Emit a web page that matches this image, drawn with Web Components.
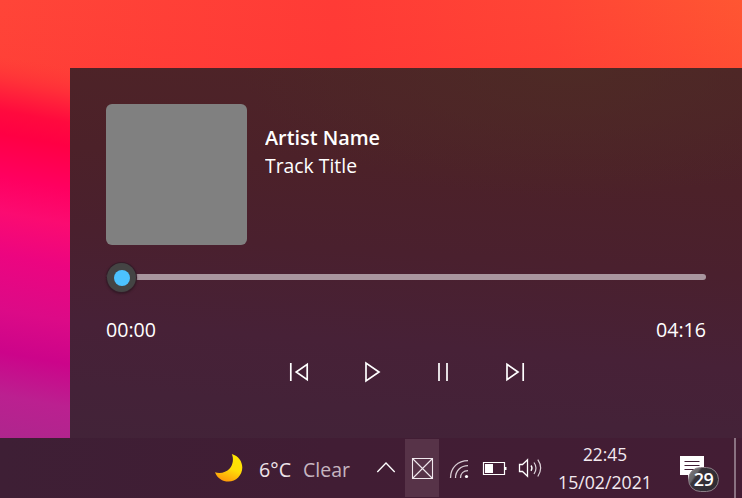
<!DOCTYPE html>
<html lang="en">
<head>
<meta charset="utf-8">
<title>Media flyout</title>
<style>
html,body{margin:0;width:742px;height:498px;overflow:hidden;font-family:"Open Sans","Noto Sans",sans-serif;color:#fff}
</style>
</head>
<body>
<desk-top>
  <media-flyout slot="flyout">
    <track-info slot="info">
      <fit-text slot="artist" fit="115" style="font-weight:600">Artist Name</fit-text>
      <fit-text slot="title" fit="92">Track Title</fit-text>
    </track-info>
    <seek-bar slot="seek">
      <fit-text slot="elapsed" fit="50">00:00</fit-text>
      <fit-text slot="total" fit="50">04:16</fit-text>
    </seek-bar>
    <transport-controls slot="controls"></transport-controls>
  </media-flyout>
  <task-bar slot="taskbar">
    <weather-item>
      <fit-text fit="32">6°C</fit-text>
      <fit-text slot="sky" fit="47">Clear</fit-text>
    </weather-item>
    <tray-icons></tray-icons>
    <clock-item>
      <fit-text slot="time" fit="44">22:45</fit-text>
      <fit-text slot="date" fit="94">15/02/2021</fit-text>
    </clock-item>
    <action-center>29</action-center>
  </task-bar>
</desk-top>
<script>
function define(name, html, setup) {
  const t = document.createElement('template');
  t.innerHTML = html;
  customElements.define(name, class extends HTMLElement {
    constructor() {
      super();
      this.attachShadow({ mode: 'open' }).appendChild(t.content.cloneNode(true));
    }
    connectedCallback() { if (setup) setup(this); }
  });
}

define('desk-top', `<style>
:host{display:grid;grid-template-columns:70px 672px;grid-template-rows:68px 370px 60px;width:742px;height:498px;position:relative;isolation:isolate}
svg{grid-area:1/1/4/3;z-index:-1}
.f{grid-area:2/2}.t{grid-area:3/1/4/3}
.f,.t{display:grid}
</style>
<svg width="742" height="498">
<defs>
<linearGradient id="top" x1="0" y1="0" x2="1" y2="0"><stop offset="0" stop-color="#ff4538"/><stop offset=".45" stop-color="#ff3b36"/><stop offset=".75" stop-color="#ff4535"/><stop offset="1" stop-color="#ff5632"/></linearGradient>
<linearGradient id="mid" x1="0" y1="0" x2="0" y2="1"><stop offset="0" stop-color="#ff3036" stop-opacity="0"/><stop offset=".8" stop-color="#ff3036" stop-opacity=".55"/><stop offset="1" stop-color="#ff3a36" stop-opacity=".7"/></linearGradient>
<linearGradient id="side" gradientUnits="userSpaceOnUse" x1="35" y1="62" x2="82" y2="438">
<stop offset="0" stop-color="#ff3a37" stop-opacity="0"/><stop offset=".07" stop-color="#ff2c39"/><stop offset=".14" stop-color="#ff0a3e"/><stop offset=".2" stop-color="#ff0044"/><stop offset=".31" stop-color="#ff0060"/><stop offset=".4" stop-color="#fb0b71"/><stop offset=".51" stop-color="#ec0580"/><stop offset=".65" stop-color="#dc0a87"/><stop offset=".76" stop-color="#cc048a"/><stop offset=".87" stop-color="#bb2090"/><stop offset="1" stop-color="#ac278d"/></linearGradient>
</defs>
<rect width="742" height="100" fill="url(#top)"/><rect width="742" height="100" fill="url(#mid)" opacity=".5"/>
<rect y="50" width="70" height="388" fill="url(#side)" id="edge"/>
</svg>
<div class="f"><slot name="flyout"></slot></div><div class="t"><slot name="taskbar"></slot></div>`, el => {
  /* The bands of the wallpaper slope down to the right. */
  const g = el.shadowRoot.querySelector('#side');
  g.setAttribute('x2', -32);
  g.setAttribute('y2', 440);
});

define('fit-text', `<style>:host{display:block;white-space:nowrap}span{display:inline-block;transform-origin:0 50%}</style><span><slot></slot></span>`, el => {
  /* Narrows the glyphs horizontally to the advance given in "fit". */
  const s = el.shadowRoot.querySelector('span');
  requestAnimationFrame(() => {
    const fit = +el.getAttribute('fit'), w = s.getBoundingClientRect().width;
    if (w) { s.style.transform = 'scaleX(' + fit / w + ')'; el.style.width = fit + 'px'; }
  });
});

define('media-flyout', `<style>
:host{display:grid;grid-template-rows:141px 107px 36px;row-gap:0;padding:36px 36px 50px;box-sizing:border-box;height:370px;
background:radial-gradient(ellipse 330px 130px at 500px 0,rgba(78,43,37,.85),rgba(78,43,37,0)),linear-gradient(184deg,#4e2427 0,#4c2129 30%,#4a202e 50%,#472137 72%,#442238 88%,#422338 100%)}
</style><slot name="info"></slot><slot name="seek"></slot><slot name="controls"></slot>`);

define('track-info', `<style>
:host{display:flex;gap:18px}
.art{width:141px;height:141px;border-radius:6px;background:#808080}
.names{padding-top:19px;font-size:20.5px;line-height:28px}
</style><div class="art"></div><div class="names"><slot name="artist"></slot><slot name="title"></slot></div>`);

define('seek-bar', `<style>
:host{display:block}
.bar{position:relative;margin-top:29px;height:6px;border-radius:3px;background:#a9969f}
.thumb{position:absolute;left:1px;top:-11px;width:29px;height:29px;border-radius:50%;background:#444;box-shadow:0 0 0 1px #351c29,0 1px 2px 1px rgba(40,20,30,.6);display:grid;place-items:center}
.thumb i{width:16px;height:16px;border-radius:50%;background:#4cc2ff;margin:1px 0 0 1px}
.times{display:flex;justify-content:space-between;margin:35px 0 0;font-size:20.5px;line-height:28px}
</style><div class="bar"><div class="thumb"><i></i></div></div><div class="times"><slot name="elapsed"></slot><slot name="total"></slot></div>`);

define('transport-controls', `<style>
:host{display:grid;grid-template-columns:repeat(4,72px);justify-content:center;height:36px;padding-top:2px}
svg{width:72px;height:36px;fill:none;stroke:#fff;stroke-width:1.7}
</style>
<svg viewBox="262 354 72 36"><path d="M290.8 363V381M307.2 364.3V379.7L296.2 372Z"/></svg>
<svg viewBox="334 354 72 36"><path d="M366 363V381L379 372Z"/></svg>
<svg viewBox="406 354 72 36"><path d="M439 363V381M447 363V381"/></svg>
<svg viewBox="478 354 72 36"><path d="M507 364.3V379.7L518 372ZM523.2 363V381"/></svg>`);

define('task-bar', `<style>
:host{display:grid;grid-template-columns:214px 154px 182px 109px 83px;height:60px;background:linear-gradient(90deg,#3e1f35 0,#411d34 45%,#431d34 100%)}
::slotted(weather-item){grid-column:2}
</style><slot></slot>`);

define('weather-item', `<style>
:host{display:flex;align-items:center;font-size:20.5px;color:#eee4ea;height:60px}
svg{width:30px;height:60px;margin-right:15px}
.sky{color:#c6b5c0;margin-left:12px}
.t{padding-top:1px}
</style>
<svg viewBox="214 438 30 60"><defs><linearGradient id="m" x1=".8" y1="0" x2=".45" y2="1"><stop offset="0" stop-color="#ffe800"/><stop offset=".55" stop-color="#ffdc08"/><stop offset="1" stop-color="#ff9d0a"/></linearGradient></defs><path d="M231.8 454C238.5 456 242.3 461.5 242.3 467.5C242.3 475.3 236 481.5 228.5 481.5C222.500 481.500 217 478 215 472.200C220 474 226 472.500 229.700 468.500C233.200 464.500 233.800 458.500 231.800 454Z" fill="url(#m)"/></svg>
<div class="t"><slot></slot></div><div class="t sky"><slot name="sky"></slot></div>`);

define('tray-icons', `<style>
:host{display:grid;grid-template-columns:37px 34px 38px 36px 37px;height:60px}
svg{height:60px;width:100%;fill:none;stroke:#fff;stroke-width:1.3}
.on{background:linear-gradient(#573348,#573348) 0 1px/34px 58px no-repeat}
</style>
<svg viewBox="368 438 37 60"><path d="M377.300 472L386 463L394.700 472"/></svg>
<svg class="on" viewBox="405 438 34 60"><path d="M412.500 458.500H432.500V478.500H412.500ZM412.500 458.500L432.500 478.500M432.500 458.500L412.500 478.500" stroke="#f0e8ed" stroke-width="1.1"/></svg>
<svg viewBox="439 438 38 60"><g stroke="#d8cdd4" stroke-width="1.3"><path d="M450.500 478C450.500 467.500 458 460.600 468 460.600M455.500 478C455.500 470.500 461 465.600 468 465.600M460.500 478C460.500 473.500 463.500 470.600 468 470.600"/></g><circle cx="466.500" cy="476.500" r="1.6" fill="#fff" stroke="none"/></svg>
<svg viewBox="477 438 36 60"><path d="M483.500 462.500H504.500V474.500H483.500Z" stroke-width="1.200"/><path d="M485 464h8v9h-8zM505 467h1.500v3h-1.500z" fill="#fff" stroke="none"/></svg>
<svg viewBox="513 438 37 60"><path d="M519.500 464.500H522.500L527.500 459.800V476.200L522.500 471.500H519.500ZM531 465.500Q533 468 531 470.800"/><path d="M534 462.500Q538 468 534 474M537.800 459.700Q543.500 468 537.800 476.500" stroke="#ded3da" stroke-width="1.200"/></svg>`);

define('clock-item', `<style>
:host{display:flex;flex-direction:column;align-items:center;box-sizing:border-box;height:60px;padding-top:2px;font-size:17.5px;line-height:28px;color:#f3eaf0}
</style><slot name="time"></slot><slot name="date"></slot>`);

define('action-center', `<style>
:host{display:block;position:relative;height:60px}
svg{display:block}
.badge{position:absolute;left:29px;top:29px;width:31px;height:25px;box-sizing:border-box;border:1.300px solid #8b7e86;border-radius:13px;background:linear-gradient(125deg,#777 0,#69676a 24%,#38343a 30%,#302c33 75%);font:600 18px/23px "Open Sans",sans-serif;text-align:center;letter-spacing:-.5px}
</style>
<svg width="83" height="60" viewBox="659 438 83 60"><path d="M680 456H704V475H692L688 480V475H680Z" fill="#fff"/><path d="M684.500 461.500H699.500M684.500 465.500H699.500M684.500 469.500H694" stroke="#411d34" stroke-width="1.100"/><path d="M735 438V498" stroke="#8a7282" stroke-width="2"/></svg>
<div class="badge"><slot></slot></div>`);
</script>
</body>
</html>
